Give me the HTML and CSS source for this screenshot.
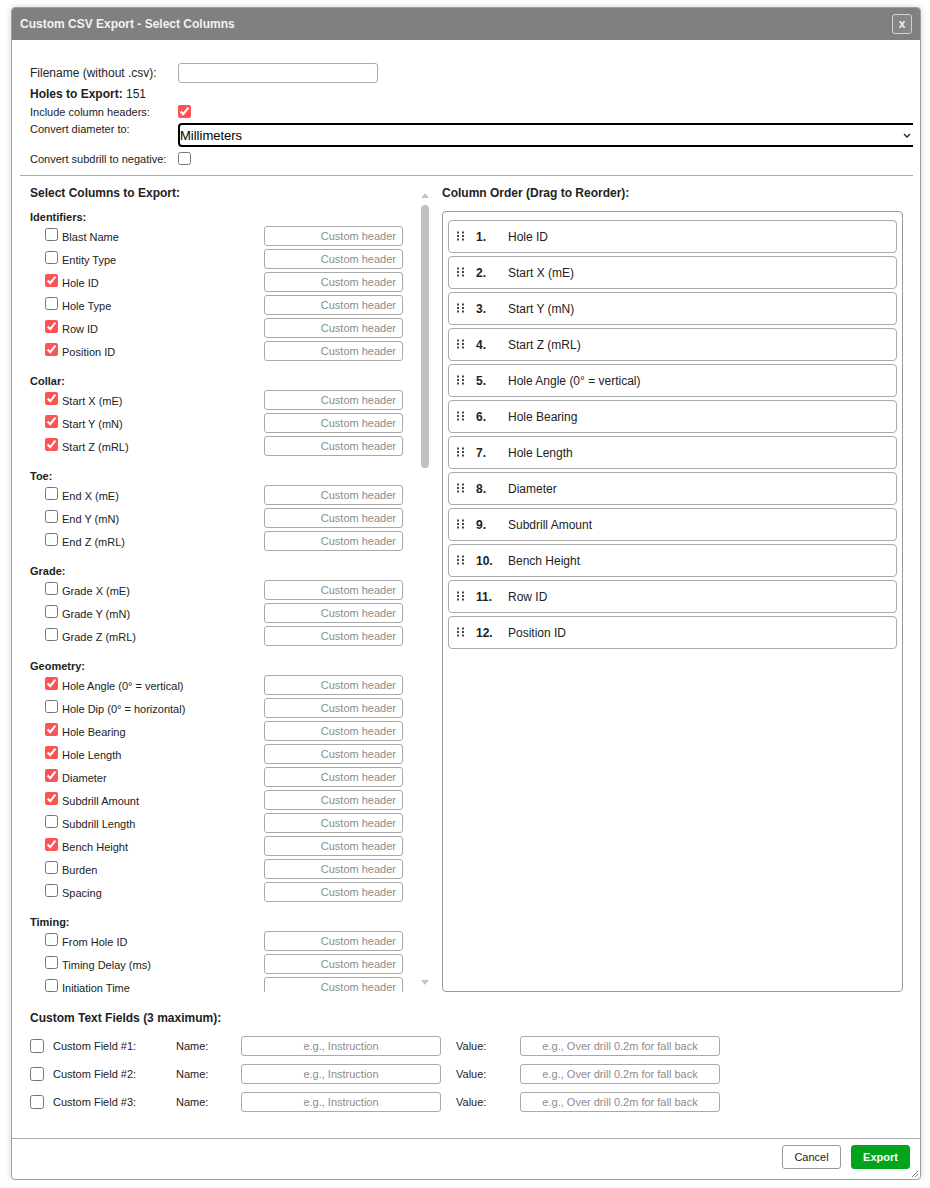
FILE: index.html
```html
<!DOCTYPE html>
<html lang="en">
<head>
    <meta charset="UTF-8">
    <meta name="viewport" content="width=device-width, initial-scale=1.0">
    <title>Custom CSV Export - Select Columns</title>
    <link rel="stylesheet" href="styles.css">
</head>
<body>
    <div class="dialog">
        <div class="dialog-header">
            <span class="dialog-title">Custom CSV Export - Select Columns</span>
            <button class="close-btn">x</button>
        </div>

        <div class="dialog-body">
            <div class="top-form">
                <div class="form-row row-filename">
                    <label class="form-label label-lg">Filename (without .csv):</label>
                    <input type="text" class="filename-input">
                </div>
                <div class="form-row row-holes">
                    <b>Holes to Export:</b>&nbsp;151
                </div>
                <div class="form-row row-check">
                    <label class="form-label">Include column headers:</label>
                    <input type="checkbox" checked>
                </div>
                <div class="form-row row-select">
                    <label class="form-label">Convert diameter to:</label>
                    <div class="select-wrap">
                        <select class="unit-select">
                            <option>Millimeters</option>
                            <option>Meters</option>
                            <option>Inches</option>
                        </select>
                        <svg class="select-chevron" width="8" height="5" viewBox="0 0 8 5">
                            <path d="M1 1 L4 4 L7 1" fill="none" stroke="#222" stroke-width="1.4"/>
                        </svg>
                    </div>
                </div>
                <div class="form-row row-check">
                    <label class="form-label">Convert subdrill to negative:</label>
                    <input type="checkbox">
                </div>
            </div>

            <div class="divider"></div>

            <div class="columns">
                <div class="select-column">
                    <div class="select-list" id="selectList">
                        <div class="section-title">Select Columns to Export:</div>
                    </div>
                    <div class="scrollbar">
                        <div class="scroll-arrow up"></div>
                        <div class="scroll-thumb"></div>
                        <div class="scroll-arrow down"></div>
                    </div>
                </div>
                <div class="order-panel">
                    <div class="section-title">Column Order (Drag to Reorder):</div>
                    <div class="order-box" id="orderBox"></div>
                </div>
            </div>

            <div class="custom-fields">
                <div class="section-title">Custom Text Fields (3 maximum):</div>
                <div class="custom-rows" id="customRows"></div>
            </div>
        </div>

        <div class="dialog-footer">
            <button class="btn btn-cancel">Cancel</button>
            <button class="btn btn-export">Export</button>
        </div>

        <svg class="resize-grip" width="9" height="9" viewBox="0 0 9 9">
            <path d="M8 2 L2 8 M8 5 L5 8" stroke="#888" stroke-width="1"/>
        </svg>
    </div>

    <script>
        const groups = [
            { name: 'Identifiers', cols: [['Blast Name', 0], ['Entity Type', 0], ['Hole ID', 1], ['Hole Type', 0], ['Row ID', 1], ['Position ID', 1]] },
            { name: 'Collar', cols: [['Start X (mE)', 1], ['Start Y (mN)', 1], ['Start Z (mRL)', 1]] },
            { name: 'Toe', cols: [['End X (mE)', 0], ['End Y (mN)', 0], ['End Z (mRL)', 0]] },
            { name: 'Grade', cols: [['Grade X (mE)', 0], ['Grade Y (mN)', 0], ['Grade Z (mRL)', 0]] },
            { name: 'Geometry', cols: [['Hole Angle (0° = vertical)', 1], ['Hole Dip (0° = horizontal)', 0], ['Hole Bearing', 1], ['Hole Length', 1], ['Diameter', 1], ['Subdrill Amount', 1], ['Subdrill Length', 0], ['Bench Height', 1], ['Burden', 0], ['Spacing', 0]] },
            { name: 'Timing', cols: [['From Hole ID', 0], ['Timing Delay (ms)', 0], ['Initiation Time', 0]] }
        ];

        const order = ['Hole ID', 'Start X (mE)', 'Start Y (mN)', 'Start Z (mRL)', 'Hole Angle (0° = vertical)',
            'Hole Bearing', 'Hole Length', 'Diameter', 'Subdrill Amount', 'Bench Height', 'Row ID', 'Position ID'];

        const list = document.getElementById('selectList');
        groups.forEach(group => {
            const groupEl = document.createElement('div');
            groupEl.className = 'col-group';
            groupEl.innerHTML = '<div class="group-label">' + group.name + ':</div>';
            group.cols.forEach(col => {
                const row = document.createElement('div');
                row.className = 'col-row';
                row.innerHTML = '<input type="checkbox"' + (col[1] ? ' checked' : '') + '>' +
                    '<span class="col-name">' + col[0] + '</span>' +
                    '<input type="text" class="header-input" placeholder="Custom header">';
                groupEl.appendChild(row);
            });
            list.appendChild(groupEl);
        });

        const handle = '<svg class="drag-handle" width="8" height="10" viewBox="0 0 8 10">' +
            '<rect x="0" y="0.5" width="2" height="2"/><rect x="5" y="0.5" width="2" height="2"/>' +
            '<rect x="0" y="4" width="2" height="2"/><rect x="5" y="4" width="2" height="2"/>' +
            '<rect x="0" y="7.5" width="2" height="2"/><rect x="5" y="7.5" width="2" height="2"/></svg>';

        const orderBox = document.getElementById('orderBox');
        order.forEach((name, i) => {
            const item = document.createElement('div');
            item.className = 'order-item';
            item.innerHTML = handle + '<span class="order-num">' + (i + 1) + '.</span><span class="order-name">' + name + '</span>';
            orderBox.appendChild(item);
        });

        const customRows = document.getElementById('customRows');
        for (let i = 1; i <= 3; i++) {
            const row = document.createElement('div');
            row.className = 'custom-row';
            row.innerHTML = '<input type="checkbox">' +
                '<span class="custom-label">Custom Field #' + i + ':</span>' +
                '<span class="custom-key">Name:</span>' +
                '<input type="text" class="custom-input" placeholder="e.g., Instruction">' +
                '<span class="custom-key value-key">Value:</span>' +
                '<input type="text" class="custom-input" placeholder="e.g., Over drill 0.2m for fall back">';
            customRows.appendChild(row);
        }
    </script>
</body>
</html>
```

FILE: styles.css
```css
body {
    margin: 0;
    font-family: "Liberation Sans", Arial, sans-serif;
    color: #222;
    background-color: #fff;
}
input[type="checkbox"] {
    width: 13px;
    height: 13px;
    margin: 0;
    accent-color: #ff5252;
}
.dialog {
    position: relative;
    box-sizing: border-box;
    width: 910px;
    height: 1173px;
    margin: 7px 0 0 11px;
    border: 1px solid #a0a0a0;
    border-radius: 4px;
    background: #fff;
    box-shadow: 0 0 6px rgba(0, 0, 0, 0.18);
    display: flex;
    flex-direction: column;
    overflow: hidden;
}
.dialog-header {
    height: 32px;
    flex: none;
    background-color: #808080;
    display: flex;
    align-items: center;
    justify-content: space-between;
    padding: 0 8px;
}
.dialog-title {
    color: #f2f2f2;
    font-size: 12px;
    font-weight: bold;
}
.close-btn {
    width: 20px;
    height: 20px;
    padding: 0;
    border: 1px solid #d0d0d0;
    border-radius: 3px;
    background: #868686;
    color: #f4eaf0;
    font-family: "Liberation Sans", Arial, sans-serif;
    font-size: 12px;
    font-weight: bold;
    line-height: 17px;
    cursor: pointer;
}
.dialog-body {
    flex: 1;
    padding: 0 7px 0 8px;
    display: flex;
    flex-direction: column;
}
.top-form {
    padding: 23px 0 0 10px;
}
.form-row {
    display: flex;
    align-items: center;
    font-size: 11px;
}
.form-label {
    width: 148px;
    flex: none;
}
.label-lg {
    font-size: 12px;
}
.row-filename {
    height: 20px;
}
.filename-input {
    box-sizing: border-box;
    width: 200px;
    height: 20px;
    border: 1px solid #a9a9a9;
    border-radius: 3px;
    padding: 0 4px;
}
.row-holes {
    margin-top: 4px;
    font-size: 12px;
    line-height: 14px;
}
.row-check {
    margin-top: 4px;
    height: 13px;
}
.row-check:last-child {
    margin-top: 5px;
}
.row-select {
    margin-top: 5px;
    align-items: flex-start;
}
.row-select .form-label {
    line-height: 12px;
}
.select-wrap {
    position: relative;
    flex: 1;
    height: 24px;
    overflow: hidden;
}
.unit-select {
    appearance: none;
    box-sizing: border-box;
    width: calc(100% + 6px);
    height: 24px;
    border: 2px solid #000;
    border-radius: 4px;
    padding: 0;
    background: #fff;
    font-family: "Liberation Sans", Arial, sans-serif;
    font-size: 13px;
    color: #000;
}
.select-chevron {
    position: absolute;
    right: 2px;
    top: 10px;
    pointer-events: none;
}
.divider {
    margin-top: 10px;
    border-top: 1px solid #aaa;
}
.columns {
    margin-top: 10px;
    padding-right: 10px;
    display: grid;
    grid-template-columns: 412px 1fr;
    gap: 10px;
    height: 806px;
}
.section-title {
    font-size: 12px;
    font-weight: bold;
    line-height: 15px;
}
.select-column {
    display: flex;
    min-height: 0;
}
.select-list {
    flex: 1;
    overflow: hidden;
    padding: 0 14px 0 10px;
}
.select-list .section-title {
    margin-bottom: 9px;
}
.scrollbar {
    width: 15px;
    flex: none;
    display: flex;
    flex-direction: column;
    align-items: center;
}
.scroll-arrow {
    width: 0;
    height: 0;
    border-left: 4px solid transparent;
    border-right: 4px solid transparent;
}
.scroll-arrow.up {
    margin-top: 7px;
    border-bottom: 5px solid #c4c4c4;
}
.scroll-arrow.down {
    margin-top: auto;
    margin-bottom: 7px;
    border-top: 5px solid #c4c4c4;
}
.scroll-thumb {
    width: 8px;
    height: 263px;
    margin-top: 7px;
    border-radius: 4px;
    background: #c1c1c1;
}
.col-group {
    margin-bottom: 13px;
}
.group-label {
    font-size: 11px;
    font-weight: bold;
    line-height: 14px;
    margin-bottom: 2px;
}
.col-row {
    display: flex;
    align-items: center;
    height: 20px;
    margin: 0 0 3px 15px;
    font-size: 11px;
}
.col-row input[type="checkbox"] {
    margin: -3px 4px 0 0;
}
.col-name {
    padding-top: 2px;
}
.header-input {
    box-sizing: border-box;
    margin-left: auto;
    width: 139px;
    height: 20px;
    border: 1px solid #a9a9a9;
    border-radius: 3px;
    padding: 0 6px;
    text-align: right;
    font-family: "Liberation Sans", Arial, sans-serif;
    font-size: 11px;
}
.header-input::placeholder,
.custom-input::placeholder {
    color: #8c8c8c;
}
.order-panel {
    display: flex;
    flex-direction: column;
}
.order-panel .section-title {
    margin-bottom: 10px;
}
.order-box {
    flex: 1;
    border: 1px solid #999;
    border-radius: 4px;
    padding: 8px 5px;
    display: flex;
    flex-direction: column;
    gap: 3px;
}
.order-item {
    box-sizing: border-box;
    height: 33px;
    border: 1px solid #aaa;
    border-radius: 4px;
    padding-left: 8px;
    display: flex;
    align-items: center;
    font-size: 12px;
    cursor: move;
}
.drag-handle {
    fill: #444;
    margin: -2px 11px 0 0;
}
.order-num {
    min-width: 32px;
    font-weight: bold;
}
.custom-fields {
    padding-left: 10px;
    margin-top: 19px;
}
.custom-rows {
    margin-top: 10px;
    display: flex;
    flex-direction: column;
    gap: 8px;
}
.custom-row {
    display: flex;
    align-items: center;
    height: 20px;
    font-size: 11px;
}
.custom-row input[type="checkbox"] {
    width: 14px;
    height: 14px;
    margin-right: 9px;
}
.custom-label {
    width: 123px;
}
.custom-key {
    width: 65px;
}
.value-key {
    margin-left: 15px;
    width: 64px;
}
.custom-input {
    box-sizing: border-box;
    width: 200px;
    height: 20px;
    border: 1px solid #a9a9a9;
    border-radius: 3px;
    text-align: center;
    font-family: "Liberation Sans", Arial, sans-serif;
    font-size: 11px;
}
.dialog-footer {
    flex: none;
    height: 41px;
    border-top: 1px solid #aaa;
    display: flex;
    justify-content: flex-end;
    align-items: flex-start;
    gap: 10px;
    padding: 6px 10px 0 0;
    box-sizing: border-box;
}
.btn {
    width: 59px;
    height: 24px;
    border-radius: 3px;
    font-family: "Liberation Sans", Arial, sans-serif;
    font-size: 11px;
    cursor: pointer;
}
.btn-cancel {
    border: 1px solid #999;
    background: #fff;
    color: #222;
}
.btn-export {
    border: 1px solid #00a51c;
    background: #00a51c;
    color: #fff;
    font-weight: bold;
}
.resize-grip {
    position: absolute;
    right: 1px;
    bottom: 1px;
}
```
